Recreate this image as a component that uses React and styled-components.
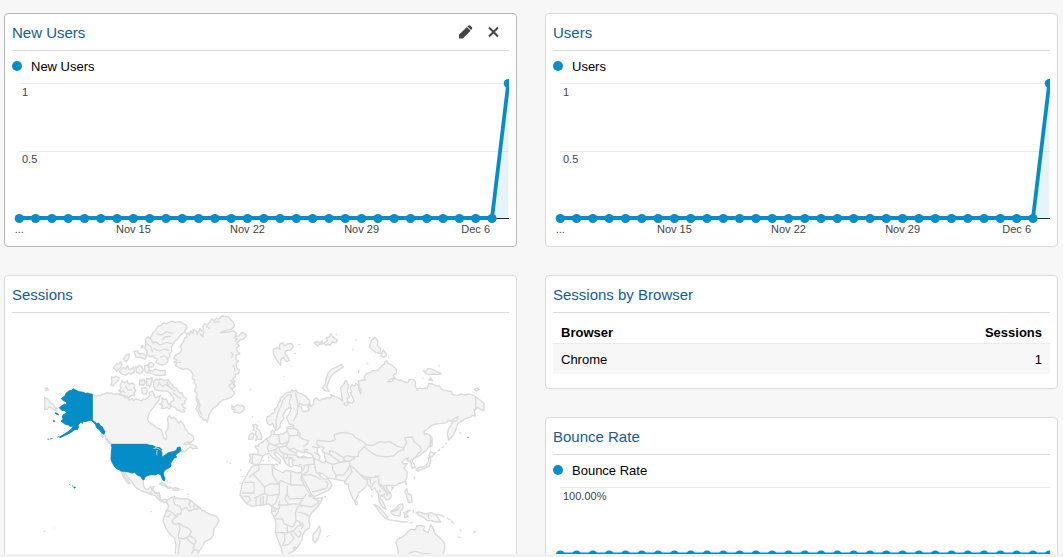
import React from "react";
import styled, { createGlobalStyle } from "styled-components";

const GlobalStyle = createGlobalStyle`
  * { box-sizing: border-box; }
  body {
    margin: 0;
    background: #f7f7f7;
    color: #000;
    font-family: "Liberation Sans", Arial, sans-serif;
    font-size: 13px;
  }
`;

const Page = styled.div`
  display: flex;
  flex-direction: column;
  height: 100vh;
  overflow: hidden;
`;

const Board = styled.main`
  flex: 1;
  min-height: 0;
  overflow: hidden;
  display: grid;
  grid-template-columns: 1fr 1fr;
  align-items: start;
  gap: 28px;
  padding: 13px 5px 0 4px;
`;

const BottomEdge = styled.div`
  flex: none;
  height: 3px;
  background: #f2f2f2;
`;

const Column = styled.div`
  display: flex;
  flex-direction: column;
  gap: 28px;
  min-width: 0;
`;

const Card = styled.section`
  padding: 0 7px 7px;
  background: #fff;
  border: 1px solid ${(p) => (p.$active ? "#b8b8b8" : "#dadada")};
  border-radius: 4px;
`;

const CardHeader = styled.header`
  display: flex;
  align-items: center;
  justify-content: space-between;
  height: 37px;
  border-bottom: 1px solid #dadada;
`;

const CardTitle = styled.h2`
  margin: 0;
  padding-top: 2px;
  font-size: 15px;
  font-weight: 400;
  line-height: 20px;
  color: #165c99;
`;

const Actions = styled.div`
  display: flex;
  align-items: center;
  gap: 15px;
  padding-right: 10px;
`;

const IconButton = styled.button`
  display: flex;
  padding: 0;
  border: 0;
  background: none;
  color: #444;
  cursor: pointer;
`;

const Legend = styled.div`
  display: flex;
  align-items: center;
  gap: 9px;
  height: 26px;
  padding-top: 4px;
`;

const LegendText = styled.span`
  padding-top: 2px;
  line-height: 20px;
`;

const LegendDot = styled.span`
  width: 10px;
  height: 10px;
  border-radius: 50%;
  background: #058dc7;
`;

const ChartSvg = styled.svg`
  display: block;
  width: 100%;
  height: auto;

  text {
    font-family: "Liberation Sans", Arial, sans-serif;
    font-size: 11px;
    fill: #444;
  }
`;

const MapSvg = styled.svg`
  display: block;
  width: 100%;
  height: auto;
`;

const DataTable = styled.table`
  width: 100%;
  margin-bottom: 7px;
  border-collapse: collapse;
  line-height: 16px;

  th {
    height: 30px;
    padding: 11px 8px 0;
    text-align: left;
    border-bottom: 1px solid #ececec;
  }
  td {
    height: 31px;
    padding: 3px 8px 0;
    background: #f7f7f7;
  }
  th:last-child,
  td:last-child {
    text-align: right;
  }
`;

const BASE = 141.5;
const TOP = 6.5;
const dayX = (i) => 7.3 + i * 16.3;
const valueY = (v) => BASE - v * (BASE - TOP);

const DAY_LABELS = [
  [0, "..."],
  [7, "Nov 15"],
  [14, "Nov 22"],
  [21, "Nov 29"],
  [28, "Dec 6"],
];

const SPIKE = [...Array(30).fill(0), 1];
const HALF = Array(31).fill(0.5);

function LineChart({ data, high, mid, days = [], name }) {
  const pts = data.map((v, i) => [dayX(i), valueY(v)]);
  const line = pts.map(([x, y]) => `${x},${y}`).join(" ");
  return (
    <ChartSvg viewBox="0 0 497 162" role="img" aria-label={name + " by day"}>
      <path d="M7 6.5H497M7 74.5H497" stroke="#ebebeb" />
      <path d="M7 141.5H497" stroke="#222" />
      <polygon
        points={`${dayX(0)},${BASE} ${line} ${dayX(30)},${BASE}`}
        fill="#058dc7"
        fillOpacity="0.1"
      />
      <polyline
        points={line}
        transform="translate(0 -0.5)"
        fill="none"
        stroke="#058dc7"
        strokeWidth="3.8"
        strokeLinejoin="round"
      />
      {pts.map(([x, y]) => (
        <circle key={x} cx={x} cy={y} r="4.6" fill="#058dc7" />
      ))}
      <text x="10" y="19">{high}</text>
      {mid && <text x="10" y="86">{mid}</text>}
      {days.map(([i, label]) => (
        <text key={label} x={dayX(i)} y="156" textAnchor="middle">
          {label}
        </text>
      ))}
    </ChartSvg>
  );
}

const NORTH_AMERICA = [
  // mainland Canada
  "M277,388L287,395 294,391 300,393 306,387 312,388 322,382 326,386 332,384 344,388 350,385 356,388 370,392 376,398 382,396 388,406 396,400 400,406 406,402 414,404 424,408 430,402 436,403 444,398 450,390 446,384 456,378 462,388 466,398 474,396 482,390 478,402 472,412 468,416 460,428 450,440 445,450 442,462 448,472 458,478 470,488 484,494 488,508 492,520 498,524 500,514 496,502 504,490 505,475 502,462 508,452 514,460 520,456 530,464 536,474 541,468 548,474 552,480 556,492 562,498 564,504 572,508 578,512 582,524 574,530 560,532 552,538 558,540 566,535 574,530 570,538 580,540 590,545 592,550 584,550 578,552 572,546 562,552 558,558 546,562 543,557 540,548 534,547 530,556 506,563 486,575 484,562 484,552 466,546 440,538 335,538 326,528 318,518 312,507 300,488 286,472 277,466Z",
  // Arctic islands
  "M334,336L342,337 348,334 358,338 354,348 346,354 340,362 332,360 336,350Z",
  "M360,362L366,348 374,354 382,348 386,358 398,354 404,362 402,370 408,376 402,384 404,390 392,392 388,398 380,394 370,392 358,386 366,380 356,378 363,370Z",
  "M420,344L424,348 432,342 436,352 430,362 424,358 418,360Z",
  "M440,340L448,342 456,338 456,350 450,366 446,360 440,362Z",
  "M424,370L436,367 442,376 438,388 428,386Z",
  "M462,348L470,342 476,346 480,342 492,346 506,344 510,354 518,360 520,366 530,370 534,378 541,384 546,384 550,394 560,402 554,408 556,414 546,418 550,426 556,430 550,434 554,440 544,442 538,436 532,436 526,428 516,424 508,418 514,410 522,406 518,394 510,384 500,378 488,378 476,376 466,374 460,362Z",
  "M486,398L492,404 500,402 504,416 514,422 508,432 500,426 496,430 484,430 488,420 478,418 486,412Z",
  "M455,212L460,202 465,198 475,183 482,182 490,174 500,176 515,168 526,172 540,170 558,180 562,190 554,196 556,202 546,206 538,214 534,222 526,226 520,236 514,248 516,260 508,266 510,275 502,282 504,288 496,298 486,300 480,298 468,293 472,283 462,278 458,272 450,276 440,266 441,258 435,250 438,232 436,224 445,214 450,222Z",
  "M450,315L458,318 465,312 480,317 496,316 495,330 480,332 465,330 450,324Z",
  "M340,308L350,296 356,298 362,290 366,300 360,310 350,318Z",
  "M358,320L370,307 376,312 382,302 388,314 394,312 400,306 404,320 392,328 386,324 378,330 366,328Z",
  "M370,283L378,270 388,267 386,280 378,290Z",
  "M402,260L412,257 418,267 430,265 440,275 434,282 420,277 408,276Z",
  "M406,306L412,308 418,300 426,305 430,317 420,327 410,321Z",
  "M434,302L444,300 448,313 442,325 434,318Z M446,296L454,292 462,298 458,306 448,306Z",
  "M423,243l5,-2 1,6 -5,2z",
  // Greenland
  "M520,280L528,270 540,263 546,253 540,245 550,231 554,220 562,215 558,207 564,204 568,210 572,197 578,206 580,193 590,199 592,208 600,191 606,200 610,193 608,184 614,175 622,180 630,171 636,161 642,168 650,159 656,162 665,153 685,155 692,164 700,171 704,183 694,193 675,197 660,203 685,201 700,197 710,205 705,215 715,213 728,201 740,211 732,221 718,227 710,235 718,242 710,250 712,259 720,266 708,270 708,283 716,288 708,295 710,308 718,316 716,325 706,328 706,336 698,342 705,350 700,358 706,364 696,372 704,385 694,397 684,400 678,403 668,405 658,413 652,422 646,425 638,431 632,441 628,448 625,457 622,471 616,464 610,465 604,456 598,452 594,439 588,432 590,425 596,415 590,408 588,397 592,387 584,378 586,370 590,363 582,352 584,346 576,340 580,331 574,319 562,311 548,313 536,307 526,301 530,296 522,291 532,285Z",
  // Iceland
  "M695,421L702,427 706,423 712,419 718,422 725,421 734,427 730,437 718,445 710,442 702,442 706,434 696,432Z",
  // Chukotka and Wrangel
  "M134,397L146,405 150,412 160,418 164,426 172,430 166,432 172,438 160,434 152,428 146,426 142,432 134,434Z M136,371l6,-2 3,5 -7,3z",
  // Pacific coast islands
  "M304,506l6,8 -2,4 -5,-8z M316,520l10,8 8,10 -8,-4z",
  // Mexico and Central America
  "M362,618L396,624 404,622 412,630 417,634 422,636 427,642 430,648 430,660 434,670 444,674 450,666 462,664 458,676 466,682 478,684 480,692 480,702 488,706 496,702 502,708 494,712 484,710 474,702 466,692 452,688 440,682 424,678 408,668 398,655 388,642 380,632 374,624 370,624 374,634 382,644 390,656 382,654 376,644 370,636 366,626Z",
  "M478,657L486,653 494,658 502,664 514,668 504,670 494,663Z M518,671l8,-3 14,5 -8,3 -12,0z M500,646l4,4M508,652l3,3M546,673h4M562,686l2,4",
  // South America
  "M502,705L510,700 514,698 524,694 526,702 530,698 545,702 560,701 572,706 580,714 592,722 600,728 606,738 612,736 618,742 632,748 650,754 657,766 652,778 642,790 641,800 640,810 634,820 622,826 612,832 610,840 606,846 596,862 590,880 526,880 526,858 528,840 524,820 508,806 498,790 490,770 490,762 494,750 500,738 506,724 500,712Z",
];

const AMERICA_BORDERS =
  "M524,696L520,706 524,718 540,724 544,734M496,736L508,738 518,744 526,752M526,752L534,746 542,748 546,732 560,728 568,738 580,734 598,730M494,752L504,756 514,746M534,752L522,760 516,768 520,776 528,778 536,774L550,784 566,790 574,800 568,812 584,820 588,830 584,838M536,776L540,792 534,812 540,830 536,850 534,880M538,818L548,822 560,818 568,812M560,820L572,832 584,838 578,852M596,860L584,852 574,866M572,708L566,716 572,728M582,716L582,732M594,724L590,734M454,668L456,676M462,682L468,686 480,684M450,680L456,686M472,692L480,692M455,230L468,232 480,240 500,232 515,236M460,250L478,258 492,252 508,256M470,205L484,210 500,200 520,206M486,226L494,216 512,214M440,236L452,244 458,262M452,222L462,238M480,278L492,272 502,280M476,352L486,364 498,358 506,366M500,350L510,368 526,378M520,384L534,396 544,400M478,352L472,364M376,362L384,376 396,374M366,374L376,384M600,206L608,214 612,200M618,184L630,190M640,172L660,170M692,262L700,268 694,278M700,300L706,318M690,346L700,352 686,362 698,376M592,400L600,420 596,432 606,450M702,218L712,222 704,230M530,292L544,292";

const USA = [
  // Alaska
  "M277,388L262,384 256,385 250,382 238,380 228,376 220,371 214,376 208,377 198,385 195,392 184,401 190,407 200,411 200,418 192,418 183,424 178,429 186,436 196,438 200,444 190,449 186,456 190,463 183,468 190,474 196,478 205,480 210,484 222,484 214,492 204,500 192,508 178,516 180,518 196,511 212,503 222,495 226,491 232,494 236,486 234,480 242,472 248,475 250,469 256,470 270,466 277,466 283,470 290,476 296,474 302,484 306,484 310,492 315,500 312,508 305,504 298,494 290,488 286,478 277,469Z",
  // contiguous states
  "M335,538L440,538 448,541 456,541 466,546 459,550 466,551 472,547 479,548 484,552 484,556 480,555 486,563 485,575 489,575 496,570 506,563 520,560 530,556 532,548 540,546 543,556 538,562 530,566 527,572 530,577 522,579 518,586 512,594 513,600 511,606 500,612 493,618 490,623 490,630 495,640 494,648 488,645 484,635 482,629 474,626 466,630 456,629 448,630 440,633 434,638 432,645 427,642 422,634 412,630 404,622 396,624 384,620 362,618 358,614 350,611 344,606 337,593 333,583 334,560 336,548 333,540Z",
  // Aleutians, Bering Sea islands, Hawaii
  "M165,443l9,3 2,4 -8,-3zM160,466l4,2 0,2 -4,-1zM142,522l6,1M150,522l8,-2M172,517l6,-3M208,658l3,2M216,662l4,2M221,666l5,1 -2,3z M218,488l8,-2 4,6 -6,3z M1402,517h4",
];

const EURASIA = [
  "M110,330L112,320 120,318 124,312 134,308 134,298 142,290 144,280 152,270 150,264 160,258 164,252 174,246 180,248 186,240 192,244 198,240 202,248 212,250 226,258 240,272 236,284 220,286 208,280 206,288 214,290 216,300 222,306 228,302 234,304 238,296 232,290 242,284 242,290 250,284 252,268 260,264 268,272 276,266 284,268 290,262 300,265 306,260 302,254 312,258 326,264 332,268 338,274 334,250 332,232 340,226 346,212 350,212 352,222 356,226 352,244 358,262 352,266 354,278 342,280 344,286 352,286 358,276 366,280 372,272 368,262 360,248 366,246 360,234 366,224 374,228 378,220 386,228 386,236 392,252 394,240 388,232 386,218 384,214 396,210 406,210 402,200 410,190 420,188 430,182 442,182 450,174 456,166 464,162 464,155 470,152 474,160 484,164 488,168 498,176 500,188 490,196 494,202 482,208 472,216 486,214 494,204 506,212 512,210 522,216 534,218 536,210 548,208 556,214 556,228 562,240 566,234 576,236 592,234 596,220 608,222 620,228 628,228 636,238 646,242 664,244 668,254 682,256 696,252 704,255 718,252 734,258 750,270 762,280 762,302 750,298 742,292 736,300 732,300 736,318 728,316 720,322 706,326 694,334 684,340 680,350 676,362 668,378 656,390 652,372 656,355 664,345 668,334 680,332 684,320 672,326 662,334 656,330 650,338 636,340 618,342 604,346 594,356 582,364 584,374 590,370 598,376 606,388 604,398 598,408 590,420 576,430 572,434 564,440 552,444 546,454 552,462 556,472 548,474 544,470 544,460 538,454 530,452 536,444 524,448 516,458 520,462 532,460 526,468 522,476 532,486 530,505 524,515 508,520 498,526 486,528 474,526 468,530 472,540 482,550 484,560 478,568 468,570 462,560 452,556 450,566 458,574 464,588 468,598 458,592 450,578 446,566 446,552 440,545 434,534 426,540 420,530 412,522 404,534 394,542 386,548 382,560 375,574 368,565 358,540 354,522 345,522 343,512 336,512 318,508 298,505 288,500 276,490 268,488 270,498 282,508 292,506 302,516 306,526 296,540 280,548 262,556 250,560 244,552 236,536 226,518 218,505 214,492 216,480 214,470 206,468 190,466 186,458 188,446 180,446 176,450 178,468 168,462 160,446 148,434 138,426 132,430 140,440 152,450 150,462 146,456 136,448 124,440 118,430 108,432 98,438 94,450 88,462 76,464 68,462 58,455 62,444 58,434 70,432 84,434 84,420 76,412 76,408 86,408 86,402 96,398 104,390 110,386 118,382 124,374 122,365 128,360 134,366 130,374 146,374 160,372 172,362 170,352 182,350 190,344 178,342 172,330 170,322 180,308 184,294 176,294 168,300 158,316 162,326 152,338 150,352 138,362 132,350 128,340 118,346 112,340Z",
  // British Isles
  "M68,345L78,343 82,348 80,356 88,360 96,382 94,388 84,388 76,392 82,380 76,374 78,364 70,360 72,352Z M58,376L66,368 72,374 68,388 56,388Z",
  // Svalbard, Franz Josef Land, Novaya Zemlya
  "M130,118L142,112 150,118 148,104 158,98 164,108 172,102 184,100 190,110 182,120 168,122 164,130 170,136 178,152 168,155 160,142 152,150 152,166 144,156 136,142 130,132Z",
  "M253,98l8,-4 8,4 8,-6 0,10 -8,0 -6,6z M280,100L292,92 288,84 300,80 302,70 310,82 322,90 318,98 306,96 300,106 294,102 288,106Z M206,104l5,-1M192,130l6,0M160,199h3M182,169h3M60,240l3,-3M376,90h4M366,118h4M316,74h5M386,180v10M410,161h5",
  "M334,163L318,172 304,178 294,190 288,208 286,222 278,234 284,242 298,244 290,232 296,214 302,200 314,188 330,178 340,170Z",
  "M418,112L424,92 434,82 440,88 444,94 442,106 452,116 450,130 438,128 426,118Z M452,136L460,120 468,130 470,138 460,142Z M474,142h4M416,83h6",
  "M580,182L588,184 594,175 608,178 622,186 634,190 626,194 610,192 596,194 586,190Z M596,210l6,-6 6,8z M626,167h4M576,205h4M733,238l8,-4 6,5 -8,4z",
  // Mediterranean islands
  "M178,470h10M206,464h8M116,440v6M116,449v6M136,462l10,3M96,452h6",
  // Sri Lanka, Japan, Sakhalin, Kurils
  "M374,572l6,2 3,8 -5,3z M558,479L568,472 580,471 588,467 596,453 594,443 602,443 602,457 596,469 580,477 570,480 564,484Z M596,438L602,424 614,432 606,440Z M600,375L606,384 606,407 600,412 602,392Z M610,432l8,-6M624,424l6,-6M636,414l6,-6M646,402l4,-4M688,366l6,5",
  // South-east Asia
  "M524,544L530,536 534,550 544,556 546,576 536,578 532,566 528,552Z M527,516l3,8 -4,-2z M486,531l5,2 -5,6z M482,605L498,596 506,584 518,582 520,594 512,602 510,618 494,616 484,610Z M432,583L446,590 462,607 474,622 466,626 452,610Z M470,628L494,632 518,636 534,635M540,640l8,-4M522,608L540,600 528,612 536,620 524,622ZM550,600v10M424,555l3,6M480,588l2,3M552,506l3,-6",
  "M558,608L568,606 586,612 604,608 620,616 632,636 618,636 604,632 592,632 580,622 566,616Z M620,612l16,4 6,6M650,624l12,6M664,632l8,10M690,658l4,6M684,680l10,4M730,668l8,-5",
  // Australia
  "M506,750L504,720 498,698 502,688 518,680 528,672 534,664 544,658 556,660 560,648 572,646 584,650 580,660 594,668 598,656 602,644 608,652 614,670 626,680 636,690 644,702 644,716 638,740 620,736 600,732 576,730 556,724 540,728 524,740Z",
  // Madagascar, small ocean islands
  "M268,648L272,662 264,686 256,698 248,690 250,672 260,662Z M282,560h6M290,680h4M296,677h4M0,460h3M30,481h4M34,500h4M40,499h3M66,320l3,2M86,335h3",
];

const AFRICA =
  "M66,124L80,120 98,118 126,118 132,120 132,130 148,138 160,144 166,136 182,138 200,144 212,142 216,150 212,158 222,178 232,196 242,210 248,218 262,220 278,218 272,232 262,246 248,260 240,272 236,286 240,300 238,310 226,316 218,330 216,345 206,362 194,376 176,386 174,400 160,400 154,370 146,350 136,322 138,300 136,284 124,262 126,246 116,236 100,240 80,242 66,244 50,236 38,222 30,208 34,190 36,176 46,158 56,140Z";

const AFRICA_BORDERS =
  "M84,120L88,134 70,146 56,158M44,172H72M70,148L104,186 122,176 146,178M126,118L128,150 146,178 152,166 182,180M182,138V180H222M148,178V206L138,232 126,244M172,182V206L164,220 176,238M172,210L180,222 206,220 218,222 230,206M72,172V204H36M104,186V205L84,214 72,220M104,206L120,212 146,208M112,212L108,238M40,214H56L62,226 52,234M78,220V242M92,216V240M100,214V240M150,226L146,240H172L190,236 206,238M150,240L144,262 134,276M138,282H158L162,296 176,302 188,306 198,288 196,264 204,244M136,322L172,324V300M174,322L190,318 204,302 214,302 208,290 198,286M206,242H220L246,246 268,230 248,218M204,262H212L228,268 240,276M218,224L208,236 218,246M164,322V348L158,362 176,358 192,340 182,324M192,322L206,338 214,326 206,316M190,368l6,-2 2,5 -6,2zM216,292L220,302 214,312M236,210L242,216M128,240L134,252 146,252M126,258H138";

const EURASIA_BORDERS =
  "M138,356L138,332 144,306 154,286 160,268 170,256 186,254M186,254L178,276 182,294M196,248L204,280 202,310 190,334M108,384L118,400 112,412 116,426M118,400L132,406 150,400 146,374M172,364L178,376 176,394 160,402 150,400M190,344L190,356 174,356M190,352L204,362 202,376 178,378M202,364L212,372 206,378 220,388 236,392 232,402 220,410M176,394L168,408 178,420 198,430M168,408L148,412 132,406M116,424L132,420 148,412M148,414L150,424 162,430 160,446M162,430L180,434 196,436M178,420L190,414 202,422M68,434L66,460M84,434L98,438M160,446L178,442 186,444M172,434L172,446M132,420L142,424M188,452L196,450M200,442L228,444 250,438M250,444L258,448 268,452M250,446L254,462 220,466M224,466L220,482M254,462L258,486 272,496M236,466L234,484 218,494M220,496L240,494 262,502 274,510M246,546L270,540 290,534 294,520 284,512M246,410L268,414M252,426L270,438M737,260V298";

const ASIA_BORDERS =
  "M270,66L260,56 262,46 280,48 300,50 316,44 312,30 330,24 348,22 368,28 376,38 396,48 410,60 428,62 450,50M406,62L396,72 386,82 384,94 366,96 352,92 340,98 318,84 300,76 298,88 280,82M298,88L312,98 332,112 344,106 340,98M344,106L356,110 376,98M284,108L308,118 332,112 356,108 360,120 352,136 340,150 318,150 308,134 308,118M318,150V164M360,120L372,130 390,148 406,156 430,158 450,152M360,124L366,140 352,158 346,170M390,148L404,162 420,162M410,158L412,176M420,156L422,178M450,50L464,52 480,50 502,64 522,68 520,74 504,80 492,92 470,96 440,92 420,80 404,66M522,68L530,52 524,38 546,36 554,52 572,66 574,78 566,84 556,98M556,98L538,108M436,152L446,160 446,176 460,184 480,180M448,180L456,190 472,204 470,214M460,184L466,198 478,204 484,210M446,196L452,200M456,212L466,206M424,186L430,176 438,168M596,264V282M486,260L500,256 510,246";

function WorldMap() {
  return (
    <MapSvg viewBox="36 939 1491 780" role="img" aria-label="World map of sessions by country">
      <g fill="#f4f4f4" stroke="#dadada" strokeWidth="4" strokeLinejoin="round">
        <g transform="translate(0 795)">
          {NORTH_AMERICA.map((d) => (
            <path key={d} d={d} />
          ))}
          <path d={AMERICA_BORDERS} fill="none" />
          <path d="M452,740h4M131,799h5M161,789h3M679,590h4M689,594h3M720,688v4M718,655h4" />
        </g>
        <g transform="translate(690 930)">
          {EURASIA.map((d) => (
            <path key={d} d={d} />
          ))}
          <path d={EURASIA_BORDERS} fill="none" />
          {/* Black Sea and Caspian Sea */}
          <path
            fill="#fff"
            d="M198,436L200,426 208,422 216,428 226,426 222,420 232,418 230,426 246,434 250,442 236,444 222,438 208,442Z M262,416L270,410 282,412 276,422 284,430 284,442 288,454 276,458 268,450 270,438 262,428Z"
          />
        </g>
        <g transform="translate(690 1275)">
          <path d={AFRICA} />
          <path d={AFRICA_BORDERS} fill="none" />
          <path d={ASIA_BORDERS} fill="none" />
        </g>
      </g>
      <g transform="translate(0 795)" fill="#058dc7" stroke="#047fb3" strokeWidth="2.4">
        {USA.map((d) => (
          <path key={d} d={d} />
        ))}
        {/* Great Lakes shoreline */}
        <path d="M460,551l10,-2 8,3 4,4M472,555l-2,6 1,10" fill="none" stroke="#d4e3ea" />
      </g>
    </MapSvg>
  );
}

function PencilIcon() {
  return (
    <svg width="14" height="14" viewBox="0 0 14 14" fill="currentColor" aria-hidden="true">
      <path d="M0 9.8L7.9 2.1L11.6 5.8L3.8 13.4H0Z" />
      <path d="M8.5 1.6L9.6 0.6Q10.5 -0.1 11.4 0.7L12.9 2.2Q13.7 3.1 12.9 4L12.1 5Z" />
    </svg>
  );
}

function CloseIcon() {
  return (
    <svg width="11" height="12" viewBox="0 0 11 12" aria-hidden="true">
      <path d="M1 1.5L10 10.5M10 1.5L1 10.5" stroke="currentColor" strokeWidth="2" />
    </svg>
  );
}

function Widget({ title, active, children }) {
  return (
    <Card $active={active}>
      <CardHeader>
        <CardTitle>{title}</CardTitle>
        {active && (
          <Actions>
            <IconButton type="button" aria-label="Edit widget">
              <PencilIcon />
            </IconButton>
            <IconButton type="button" aria-label="Remove widget">
              <CloseIcon />
            </IconButton>
          </Actions>
        )}
      </CardHeader>
      {children}
    </Card>
  );
}

function ChartWidget({ title, active, ...chart }) {
  return (
    <Widget title={title} active={active}>
      <Legend>
        <LegendDot />
        <LegendText>{title}</LegendText>
      </Legend>
      <LineChart name={title} {...chart} />
    </Widget>
  );
}

export default function App() {
  return (
    <Page>
      <GlobalStyle />
      <Board>
        <Column>
          <ChartWidget title="New Users" active data={SPIKE} high="1" mid="0.5" days={DAY_LABELS} />
          <Widget title="Sessions">
            <WorldMap />
          </Widget>
        </Column>
        <Column>
          <ChartWidget title="Users" data={SPIKE} high="1" mid="0.5" days={DAY_LABELS} />
          <Widget title="Sessions by Browser">
            <DataTable>
              <thead>
                <tr>
                  <th scope="col">Browser</th>
                  <th scope="col">Sessions</th>
                </tr>
              </thead>
              <tbody>
                <tr>
                  <td>Chrome</td>
                  <td>1</td>
                </tr>
              </tbody>
            </DataTable>
          </Widget>
          <ChartWidget title="Bounce Rate" data={HALF} high="100.00%" />
        </Column>
      </Board>
      <BottomEdge />
    </Page>
  );
}
